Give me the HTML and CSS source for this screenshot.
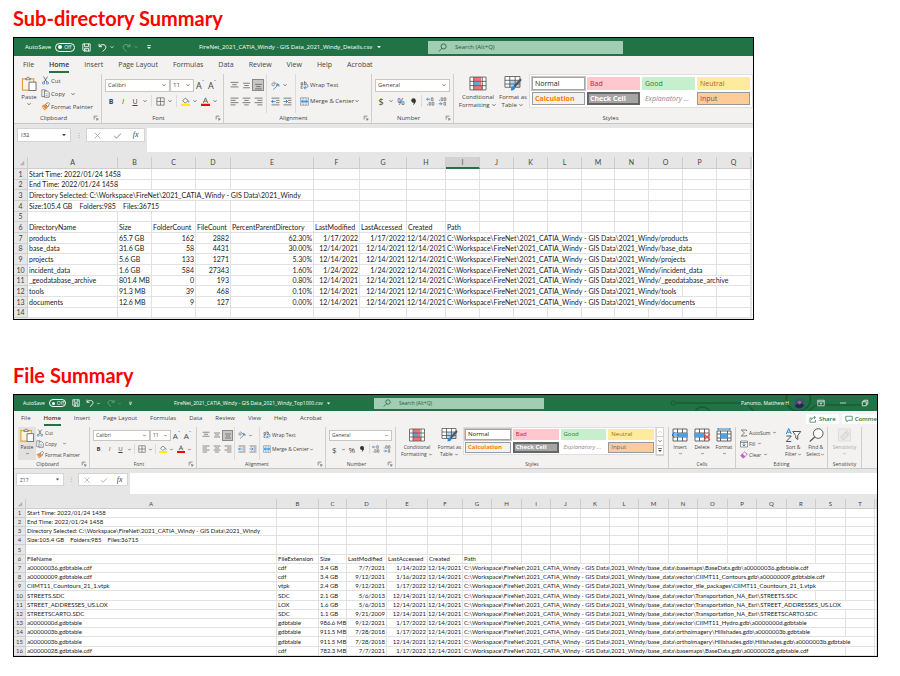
FILE: index.html
```html
<!DOCTYPE html>
<html lang="en">
<head>
<meta charset="utf-8">
<title>Directory and file summary</title>
<link rel="stylesheet" href="styles.css">
</head>
<body>
<svg class="defs" width="0" height="0" aria-hidden="true">
<symbol id="chev" viewBox="0 0 8 8"><path d="M2 3l2 2 2-2" fill="none" stroke="currentColor"/></symbol>
<symbol id="tri" viewBox="0 0 8 8"><path d="M1.500 2.500h5L4 5.500z" fill="currentColor"/></symbol>
<symbol id="save" viewBox="0 0 16 16"><path d="M1.500 1.500h13v13h-11l-2-2zM4.500 1.500v5h7v-5M4.500 14.500v-5h7v5M7 11v3" fill="none" stroke="currentColor" stroke-width="1.500"/></symbol>
<symbol id="undo" viewBox="0 0 16 16"><path d="M2 1.500v5h5M2 6.500c3-5 12-5 12 1 0 3-3 5-6 7.500" fill="none" stroke="currentColor" stroke-width="1.700"/></symbol>
<symbol id="redo" viewBox="0 0 16 16"><path d="M14 1.500v5H9M14 6.500c-3-5-12-5-12 1 0 3 3 5 6 7.500" fill="none" stroke="currentColor" stroke-width="1.700"/></symbol>
<symbol id="more" viewBox="0 0 8 8"><path d="M1.500 2h5" stroke="currentColor"/><path d="M1.500 4h5L4 6.500z" fill="currentColor"/></symbol>
<symbol id="lens" viewBox="0 0 16 16"><circle cx="10" cy="6" r="4.500" fill="none" stroke="currentColor" stroke-width="1.400"/><path d="M7 9.500L1.500 15" stroke="currentColor" stroke-width="1.400"/></symbol>
<symbol id="paste" viewBox="0 0 16 16"><path d="M1 3h12v12H1z" fill="#fbf3e4" stroke="#e5a044" stroke-width="1.300"/><path d="M4.500 4V2.500h1.500C6 .5 8 .5 8 2.500h1.500V4z" fill="#f3f2f1" stroke="#666" stroke-width=".8"/><path d="M8 6.500h7.500v9H8z" fill="#fff" stroke="#666"/></symbol>
<symbol id="cut" viewBox="0 0 16 16"><path d="M4.500 1l6 10M11.500 1l-6 10" stroke="#555" stroke-width="1.300"/><circle cx="4.500" cy="12.500" r="2" fill="none" stroke="#2b88d8" stroke-width="1.400"/><circle cx="11.500" cy="12.500" r="2" fill="none" stroke="#2b88d8" stroke-width="1.400"/></symbol>
<symbol id="copy" viewBox="0 0 16 16"><path d="M1.500 1.500h6v12h-6z" fill="#fff" stroke="#666" stroke-width="1.300"/><path d="M6 3.500h5.500l3 3v8H6z" fill="#fff" stroke="#555" stroke-width="1.300"/><path d="M8 8.500h4M8 11.500h4" stroke="#2b88d8"/></symbol>
<symbol id="brush" viewBox="0 0 16 16"><path d="M1 7l6-3 5 6-6 5z" fill="#ee8a2c"/><path d="M3 8l4 5" stroke="#fff"/><path d="M8 4l5-3 2 2-3 6z" fill="#fff" stroke="#555" stroke-width="1.200"/></symbol>
<symbol id="border" viewBox="0 0 16 16"><path d="M1.500 1.500h13v13h-13zM8 1.500v13M1.500 8h13" fill="none" stroke="#666" stroke-width="1.300"/></symbol>
<symbol id="fill" viewBox="0 0 16 16"><path d="M3 6.500L8 2l4.500 4.500-5 4.500z" fill="#fff" stroke="#555" stroke-width="1.300"/><path d="M12 6c2 1 2 3 2 4" fill="none" stroke="#2b88d8" stroke-width="1.600"/><path d="M0 12h16v4H0z" fill="#ffee00"/></symbol>
<symbol id="fcolor" viewBox="0 0 16 16"><path d="M4 10.500L8 1.500l4 9M5.500 7.500h5" fill="none" stroke="#555" stroke-width="1.500"/><path d="M0 12h16v4H0z" fill="#f00"/></symbol>
<symbol id="atop" viewBox="0 0 16 16"><path d="M1 2.500h14M4 6.500h8M1 10.500h14" stroke="#555" stroke-width="1.300"/></symbol>
<symbol id="amid" viewBox="0 0 16 16"><path d="M2 4h12M4 8h8M2 12h12" stroke="#555" stroke-width="1.300"/></symbol>
<symbol id="abot" viewBox="0 0 16 16"><path d="M2 6h12M4 10h8M2 14h12" stroke="#555" stroke-width="1.300"/></symbol>
<symbol id="aleft" viewBox="0 0 16 16"><path d="M1 2h14M1 6h9M1 10h14M1 14h9" stroke="#555" stroke-width="1.300"/></symbol>
<symbol id="acen" viewBox="0 0 16 16"><path d="M1 2h14M4 6h8M1 10h14M4 14h8" stroke="#555" stroke-width="1.300"/></symbol>
<symbol id="aright" viewBox="0 0 16 16"><path d="M1 2h14M6 6h9M1 10h14M6 14h9" stroke="#555" stroke-width="1.300"/></symbol>
<symbol id="orient" viewBox="0 0 16 16"><circle cx="4" cy="6" r="2.500" fill="none" stroke="#555"/><path d="M5 1l5 5M10 4a2 2 0 1 1-1 4" fill="none" stroke="#555"/><path d="M4 15L14 6M14 10V6h-4" fill="none" stroke="#2b88d8" stroke-width="1.500"/></symbol>
<symbol id="outdent" viewBox="0 0 16 16"><path d="M1 2h14M9 6h6M9 10h6M1 14h14" stroke="#555" stroke-width="1.300"/><path d="M8 8H1M4 5L1 8l3 3" fill="none" stroke="#2b88d8" stroke-width="1.600"/></symbol>
<symbol id="indent" viewBox="0 0 16 16"><path d="M1 2h14M9 6h6M9 10h6M1 14h14" stroke="#555" stroke-width="1.300"/><path d="M1 8h7M5 5l3 3-3 3" fill="none" stroke="#2b88d8" stroke-width="1.600"/></symbol>
<symbol id="wrap" viewBox="0 0 16 16"><path d="M2 3h3v4H2zM8 0v7h3V3H8M5 9H2v4h3" fill="none" stroke="#555" stroke-width="1.200"/><path d="M13 6c3 6-1 6-6 6M10 9l-3 3 3 3" fill="none" stroke="#2b88d8" stroke-width="1.600"/></symbol>
<symbol id="merge" viewBox="0 0 16 16"><path d="M1 1.500h14v13H1zM5.500 1.500v3M10.500 1.500v3M5.500 11.500v3M10.500 11.500v3" fill="#fff" stroke="#666"/><path d="M1 4.500h14v7H1z" fill="#9fd1f5"/><path d="M2.500 8h11M5 6L3 8l2 2M11 6l2 2-2 2" fill="none" stroke="#1b74c4" stroke-width="1.200"/></symbol>
<symbol id="comma" viewBox="0 0 16 16"><circle cx="8" cy="6" r="4" fill="#333"/><path d="M12 6c0 5-3 7-5 8 2-3 2-4 1-6z" fill="#333"/></symbol>
<symbol id="decinc" viewBox="0 0 16 16"><path d="M7 4H1M3.500 1.500L1 4l2.500 2.500" fill="none" stroke="#2b88d8" stroke-width="1.500"/><path d="M9.500 1.500h3v5h-3zM5.500 9.500h3v5h-3zM11 9.500h3v5h-3zM2.500 13v2" fill="none" stroke="#666" stroke-width="1.200"/></symbol>
<symbol id="decdec" viewBox="0 0 16 16"><path d="M1 12h6M4.500 9.500L7 12l-2.500 2.500" fill="none" stroke="#2b88d8" stroke-width="1.500"/><path d="M5.500 1.500h3v5h-3zM11 1.500h3v5h-3zM10.500 9.500h3v5h-3zM2.500 5v2" fill="none" stroke="#666" stroke-width="1.200"/></symbol>
<symbol id="cond" viewBox="0 0 16 14"><path d="M.5 1h15v12H.5z" fill="#fff"/><path d="M4 1h7v4H4zM4 9h8v4H4z" fill="#f6716f"/><path d="M4 5h5v4H4z" fill="#5aa7e6"/><path d="M9 5h2v4H9z" fill="#f6716f"/><path d="M.5 1h15v12H.5zM.5 5h15M.5 9h15M4 1v12M12 1v12" fill="none" stroke="#555" stroke-width=".8"/></symbol>
<symbol id="fmt" viewBox="0 0 16 14"><path d="M.5.500h14v10H.5z" fill="#fff"/><path d="M5 4h9.500v7H5z" fill="#a9d4f5"/><path d="M.5.500h14v10H.5zM.5 4h14M.5 7.500h14M5 .5v10M10 .5v10" fill="none" stroke="#555" stroke-width=".8"/><path d="M15.500 3L9 10" stroke="#555" stroke-width="2"/><path d="M6 13.500c0-3 1-4 3-4 2 1 1 4-3 4z" fill="#2b88d8"/></symbol>
<symbol id="launch" viewBox="0 0 8 8"><path d="M1.500 6V1.500H6M3.500 3.500l3 3M6.500 4v2.500H4" fill="none" stroke="#666" stroke-width=".9"/></symbol>
<symbol id="x" viewBox="0 0 16 16"><path d="M3 3l10 10M13 3L3 13" stroke="#a8a8a8" stroke-width="1.500"/></symbol>
<symbol id="tick" viewBox="0 0 16 16"><path d="M2 8.500l4 4 8-8" fill="none" stroke="#a8a8a8" stroke-width="1.800"/></symbol>
<symbol id="cins" viewBox="0 0 16 14"><path d="M1 1h14v12H1zM1 5h14M1 9h14M5.500 1v12M10.500 1v12" fill="#fff" stroke="#555" stroke-width=".9"/><path d="M5 5h11v4H5z" fill="#4aa3e8"/><path d="M7 7H0M2.500 4.500L0 7l2.500 2.500" fill="none" stroke="#1b74c4"/></symbol>
<symbol id="cdel" viewBox="0 0 16 14"><path d="M1 1h14v12H1zM1 5h14M1 9h14M5.500 1v12M10.500 1v12" fill="#fff" stroke="#555" stroke-width=".9"/><path d="M0 5h10v4H0z" fill="#4aa3e8"/><path d="M10 6l6 6M16 6l-6 6" stroke="#ec4b4b" stroke-width="1.300"/></symbol>
<symbol id="cfmt" viewBox="0 0 16 14"><path d="M1 3h14v10H1zM1 6h14M1 10h14M4.500 3v10M11.500 3v10" fill="#fff" stroke="#555" stroke-width=".9"/><path d="M4.500 5.500h7v5h-7z" fill="#4aa3e8"/><path d="M2 1h12M2 0v2M14 0v2" stroke="#1b74c4" stroke-width=".9"/></symbol>
<symbol id="sum" viewBox="0 0 16 16"><path d="M13 4V2H2.500L9 8l-6.500 6H13v-2" fill="none" stroke="#555" stroke-width="1.400"/></symbol>
<symbol id="down" viewBox="0 0 16 16"><path d="M1 2h14v12H1zM1 5h14" fill="#fff" stroke="#555" stroke-width="1.200"/><path d="M8 5v7M5 9l3 3 3-3" fill="none" stroke="#1b74c4" stroke-width="1.600"/></symbol>
<symbol id="eraser" viewBox="0 0 16 16"><path d="M1.500 9L9 2l5.500 4L8 13.500H5z" fill="#fff" stroke="#a53fb5" stroke-width="1.400"/><path d="M1.500 9L5 5.500l5.500 5-2.500 3H5z" fill="#c261cf"/></symbol>
<symbol id="sort" viewBox="0 0 16 14"><path d="M1 6l2.500-5.500L6 6M2 4.200h3" fill="none" stroke="#1b88d8"/><path d="M1 8h5l-5 5.500h5" fill="none" stroke="#555"/><path d="M7.500 3.500h8l-3 4v4l-2-1.500V7.500z" fill="#fff" stroke="#555"/></symbol>
<symbol id="find" viewBox="0 0 16 14"><circle cx="10" cy="5.500" r="4.800" fill="#fff" stroke="#555"/><path d="M6.500 9L1.500 13.500" stroke="#555" stroke-width="1.200"/></symbol>
<symbol id="sens" viewBox="0 0 16 14"><path d="M2 1h12v12H2z" fill="#e6e6e6" stroke="#c4c4c4"/><path d="M4 9l5-5 3 3-5 5zM9 2l4 4" fill="#d0d0d0" stroke="#aaa"/></symbol>
<symbol id="share" viewBox="0 0 16 16"><path d="M6 6H2v8.500h11V10M5 10c1-4 4-5 7-5M10 2l3 3-3 3" fill="none" stroke="#217346" stroke-width="1.400"/></symbol>
<symbol id="comment" viewBox="0 0 16 16"><path d="M1.500 2.500h13v8H7l-3 3v-3H1.500z" fill="none" stroke="#217346" stroke-width="1.400"/></symbol>
<symbol id="ropts" viewBox="0 0 16 16"><path d="M1.500 2.500h13v11h-13zM1.500 5.500h13M8 12V7.500M6 9.500l2-2 2 2" fill="none" stroke="#fff" stroke-width="1.300"/></symbol>
<symbol id="min" viewBox="0 0 16 16"><path d="M2 8h12" stroke="#fff" stroke-width="1.300"/></symbol>
<symbol id="restore" viewBox="0 0 16 16"><path d="M2.500 5.500h8v8h-8zM5.500 5.500v-3h8v8h-3" fill="none" stroke="#fff" stroke-width="1.500"/></symbol>
<symbol id="corner" viewBox="0 0 8 8"><path d="M7 1v6H1z" fill="#b4b4b4"/></symbol>
</svg>

<main>
<h1>Sub-directory Summary</h1>
<section class="win win-a">
  <header class="title">
    <div class="quick">
      <label class="auto">AutoSave <span class="pill"><input type="checkbox"><i></i>Off</span></label>
      <button aria-label="Save"><svg class="i"><use href="#save"/></svg></button>
      <button aria-label="Undo"><svg class="i"><use href="#undo"/></svg><svg class="c"><use href="#chev"/></svg></button>
      <button class="dim" aria-label="Redo"><svg class="i"><use href="#redo"/></svg><svg class="c"><use href="#chev"/></svg></button>
      <button aria-label="Customize"><svg class="c"><use href="#more"/></svg></button>
    </div>
    <div class="name">FireNet_2021_CATIA_Windy - GIS Data_2021_Windy_Details.csv <svg class="c"><use href="#tri"/></svg></div>
    <label class="search"><svg class="i"><use href="#lens"/></svg><input type="text" placeholder="Search (Alt+Q)" aria-label="Search"></label>
  </header>
  <nav class="tabs"><button>File</button><button class="on">Home</button><button>Insert</button><button>Page Layout</button><button>Formulas</button><button>Data</button><button>Review</button><button>View</button><button>Help</button><button>Acrobat</button></nav>
  <div class="ribbon">
    <div class="group clip">
      <div class="body">
        <button class="big"><svg><use href="#paste"/></svg><span>Paste</span><svg class="c"><use href="#chev"/></svg></button>
        <div class="list">
          <button><svg class="i"><use href="#cut"/></svg>Cut</button>
          <button><svg class="i"><use href="#copy"/></svg>Copy <svg class="c"><use href="#chev"/></svg></button>
          <button><svg class="i"><use href="#brush"/></svg>Format Painter</button>
        </div>
      </div>
      <div class="label"><span>Clipboard</span><svg><use href="#launch"/></svg></div>
    </div>
    <div class="group font">
      <div class="body rows">
        <div class="row">
          <span class="pick face"><select aria-label="Font"><option>Calibri</option></select><svg class="c"><use href="#chev"/></svg></span>
          <span class="pick size"><select aria-label="Font size"><option>11</option></select><svg class="c"><use href="#chev"/></svg></span>
          <button class="ib grow">A<sup>ˆ</sup></button><button class="ib shrink">A<sup>ˇ</sup></button>
        </div>
        <div class="row">
          <button class="ib"><b>B</b></button><button class="ib"><em>I</em></button><button class="ib"><u>U</u></button><button class="cb" aria-label="Underline style"><svg><use href="#chev"/></svg></button><hr>
          <button class="ib" aria-label="Borders"><svg><use href="#border"/></svg></button><button class="cb" aria-label="Border style"><svg><use href="#chev"/></svg></button><hr>
          <button class="ib" aria-label="Fill colour"><svg><use href="#fill"/></svg></button><button class="cb" aria-label="Fill choices"><svg><use href="#chev"/></svg></button>
          <button class="ib" aria-label="Font colour"><svg><use href="#fcolor"/></svg></button><button class="cb" aria-label="Font colour choices"><svg><use href="#chev"/></svg></button>
        </div>
      </div>
      <div class="label"><span>Font</span><svg><use href="#launch"/></svg></div>
    </div>
    <div class="group align">
      <div class="body">
        <div class="rows">
          <div class="row"><button class="ib" aria-label="Top"><svg><use href="#atop"/></svg></button><button class="ib" aria-label="Middle"><svg><use href="#amid"/></svg></button><button class="ib pressed" aria-label="Bottom"><svg><use href="#abot"/></svg></button></div>
          <div class="row"><button class="ib" aria-label="Left"><svg><use href="#aleft"/></svg></button><button class="ib" aria-label="Centre"><svg><use href="#acen"/></svg></button><button class="ib" aria-label="Right"><svg><use href="#aright"/></svg></button></div>
        </div><hr>
        <div class="rows">
          <div class="row"><button class="ib" aria-label="Orientation"><svg><use href="#orient"/></svg></button><button class="cb" aria-label="Angles"><svg><use href="#chev"/></svg></button></div>
          <div class="row"><button class="ib" aria-label="Outdent"><svg><use href="#outdent"/></svg></button><button class="ib" aria-label="Indent"><svg><use href="#indent"/></svg></button></div>
        </div><hr>
        <div class="rows">
          <div class="row"><button class="tb"><span class="ib"><svg><use href="#wrap"/></svg></span>Wrap Text</button></div>
          <div class="row"><button class="tb"><span class="ib"><svg><use href="#merge"/></svg></span>Merge &amp; Center <svg class="c"><use href="#chev"/></svg></button></div>
        </div>
      </div>
      <div class="label"><span>Alignment</span><svg><use href="#launch"/></svg></div>
    </div>
    <div class="group number">
      <div class="body rows">
        <div class="row"><span class="pick"><select aria-label="Number format"><option>General</option></select><svg class="c"><use href="#chev"/></svg></span></div>
        <div class="row"><button class="ib glyph">$</button><button class="cb" aria-label="Currency"><svg><use href="#chev"/></svg></button><button class="ib glyph">%</button><button class="ib" aria-label="Comma"><svg><use href="#comma"/></svg></button><hr><button class="ib" aria-label="More decimals"><svg><use href="#decinc"/></svg></button><button class="ib" aria-label="Fewer decimals"><svg><use href="#decdec"/></svg></button></div>
      </div>
      <div class="label"><span>Number</span><svg><use href="#launch"/></svg></div>
    </div>
    <div class="group styles">
      <div class="body">
        <button class="big"><svg><use href="#cond"/></svg><span>Conditional</span><span>Formatting <svg class="c"><use href="#chev"/></svg></span></button>
        <button class="big"><svg><use href="#fmt"/></svg><span>Format as</span><span>Table <svg class="c"><use href="#chev"/></svg></span></button>
        <div class="gallery"><button class="s-normal">Normal</button><button class="s-bad">Bad</button><button class="s-good">Good</button><button class="s-neutral">Neutral</button><button class="s-calc">Calculation</button><button class="s-check">Check Cell</button><button class="s-expl">Explanatory ...</button><button class="s-input">Input</button></div>
      </div>
      <div class="label"><span>Styles</span></div>
    </div>
  </div>
  <div class="formula">
    <label class="cell"><input type="text" value="I32" aria-label="Name box"><svg class="c"><use href="#tri"/></svg></label>
    <span class="dots">⋮</span>
    <div class="fx"><button aria-label="Cancel"><svg class="i"><use href="#x"/></svg></button><button aria-label="Enter"><svg class="i"><use href="#tick"/></svg></button><button><em>fx</em></button></div>
    <input class="bar" type="text" aria-label="Formula">
  </div>
  <table>
    <colgroup><col class="w14"><col class="w90"><col class="w34"><col class="w44"><col class="w35"><col class="w83"><col class="w46"><col class="w47"><col class="w39"><col class="w34"><col class="w34"><col class="w34"><col class="w34"><col class="w33"><col class="w34"><col class="w34"><col class="w34"><col class="w34"><col></colgroup>
    <thead><tr><th class="corner"><svg><use href="#corner"/></svg><th>A<th>B<th>C<th>D<th>E<th>F<th>G<th>H<th class="sel">I<th>J<th>K<th>L<th>M<th>N<th>O<th>P<th>Q<th></thead>
    <tbody>
    <tr><th>1<td colspan="2">Start Time: 2022/01/24 1458<td><td><td><td><td><td><td><td><td><td><td><td><td><td><td><td>
    <tr><th>2<td>End Time: 2022/01/24 1458<td><td><td><td><td><td><td><td><td><td><td><td><td><td><td><td><td><td>
    <tr><th>3<td colspan="5">Directory Selected: C:\Workspace\FireNet\2021_CATIA_Windy - GIS Data\2021_Windy<td><td><td><td><td><td><td><td><td><td><td><td><td>
    <tr><th>4<td colspan="3">Size:105.4 GB &nbsp; &nbsp;Folders:985 &nbsp; &nbsp;Files:36715<td><td><td><td><td><td><td><td><td><td><td><td><td><td><td>
    <tr><th>5<td><td><td><td><td><td><td><td><td><td><td><td><td><td><td><td><td><td>
    <tr><th>6<td>DirectoryName<td>Size<td>FolderCount<td>FileCount<td>PercentParentDirectory<td>LastModified<td>LastAccessed<td>Created<td>Path<td><td><td><td><td><td><td><td><td>
    <tr><th>7<td>products<td>65.7 GB<td class="n">162<td class="n">2882<td class="n">62.30%<td class="n">1/17/2022<td class="n">1/17/2022<td class="n">12/14/2021<td colspan="8">C:\Workspace\FireNet\2021_CATIA_Windy - GIS Data\2021_Windy/products<td><td>
    <tr><th>8<td>base_data<td>31.6 GB<td class="n">58<td class="n">4431<td class="n">30.00%<td class="n">12/14/2021<td class="n">12/14/2021<td class="n">12/14/2021<td colspan="8">C:\Workspace\FireNet\2021_CATIA_Windy - GIS Data\2021_Windy/base_data<td><td>
    <tr><th>9<td>projects<td>5.6 GB<td class="n">133<td class="n">1271<td class="n">5.30%<td class="n">12/14/2021<td class="n">12/14/2021<td class="n">12/14/2021<td colspan="8">C:\Workspace\FireNet\2021_CATIA_Windy - GIS Data\2021_Windy/projects<td><td>
    <tr><th>10<td>incident_data<td>1.6 GB<td class="n">584<td class="n">27343<td class="n">1.60%<td class="n">1/24/2022<td class="n">1/24/2022<td class="n">12/14/2021<td colspan="8">C:\Workspace\FireNet\2021_CATIA_Windy - GIS Data\2021_Windy/incident_data<td><td>
    <tr><th>11<td>_geodatabase_archive<td>801.4 MB<td class="n">0<td class="n">193<td class="n">0.80%<td class="n">12/14/2021<td class="n">12/14/2021<td class="n">12/14/2021<td colspan="9">C:\Workspace\FireNet\2021_CATIA_Windy - GIS Data\2021_Windy/_geodatabase_archive<td>
    <tr><th>12<td>tools<td>91.3 MB<td class="n">39<td class="n">468<td class="n">0.10%<td class="n">12/14/2021<td class="n">12/14/2021<td class="n">12/14/2021<td colspan="7">C:\Workspace\FireNet\2021_CATIA_Windy - GIS Data\2021_Windy/tools<td><td><td>
    <tr><th>13<td>documents<td>12.6 MB<td class="n">9<td class="n">127<td class="n">0.00%<td class="n">12/14/2021<td class="n">12/14/2021<td class="n">12/14/2021<td colspan="8">C:\Workspace\FireNet\2021_CATIA_Windy - GIS Data\2021_Windy/documents<td><td>
    <tr><th>14<td><td><td><td><td><td><td><td><td><td><td><td><td><td><td><td><td><td>
    </tbody>
  </table>
</section>

<h1 class="second">File Summary</h1>
<section class="win win-b">
  <header class="title">
    <div class="quick">
      <label class="auto">AutoSave <span class="pill"><input type="checkbox"><i></i>Off</span></label>
      <button aria-label="Save"><svg class="i"><use href="#save"/></svg></button>
      <button aria-label="Undo"><svg class="i"><use href="#undo"/></svg><svg class="c"><use href="#chev"/></svg></button>
      <button class="dim" aria-label="Redo"><svg class="i"><use href="#redo"/></svg><svg class="c"><use href="#chev"/></svg></button>
      <button aria-label="Customize"><svg class="c"><use href="#more"/></svg></button>
    </div>
    <div class="name">FireNet_2021_CATIA_Windy - GIS Data_2021_Windy_Top1000.csv <svg class="c"><use href="#tri"/></svg></div>
    <label class="search"><svg class="i"><use href="#lens"/></svg><input type="text" placeholder="Search (Alt+Q)" aria-label="Search"></label>
    <div class="user">
      <svg class="circuit" viewBox="0 0 330 16" preserveAspectRatio="xMaxYMid slice" aria-hidden="true"><path d="M130 8h70l8 8M262 16l8-6h50M150 16a8 8 0 0 1 14 0" fill="none" stroke="#1a5c38" stroke-width="1.500"/><circle cx="128" cy="8" r="2" fill="none" stroke="#1a5c38"/><circle cx="252" cy="4" r="12" fill="none" stroke="#1a5c38" stroke-width="2"/></svg>
      <span>Panunto, Matthew H</span>
      <svg class="avatar" viewBox="0 0 12 12"><circle cx="6" cy="6" r="6" fill="#37527c"/><path d="M1 9c2-4 7-5 10-1a6 6 0 0 1-10 1z" fill="#1d2c49"/><circle cx="6" cy="5" r="2" fill="#a5695a"/></svg>
      <button aria-label="Ribbon options"><svg class="i"><use href="#ropts"/></svg></button><button aria-label="Minimize"><svg class="i"><use href="#min"/></svg></button><button aria-label="Restore"><svg class="i"><use href="#restore"/></svg></button>
    </div>
  </header>
  <nav class="tabs"><button>File</button><button class="on">Home</button><button>Insert</button><button>Page Layout</button><button>Formulas</button><button>Data</button><button>Review</button><button>View</button><button>Help</button><button>Acrobat</button>
    <span class="actions"><button><svg class="i"><use href="#share"/></svg>Share</button><button class="cut"><svg class="i"><use href="#comment"/></svg>Comme</button></span></nav>
  <div class="ribbon">
    <div class="group clip">
      <div class="body">
        <button class="big shade"><svg><use href="#paste"/></svg><span>Paste</span><svg class="c"><use href="#chev"/></svg></button>
        <div class="list">
          <button><svg class="i"><use href="#cut"/></svg>Cut</button>
          <button><svg class="i"><use href="#copy"/></svg>Copy <svg class="c"><use href="#chev"/></svg></button>
          <button><svg class="i"><use href="#brush"/></svg>Format Painter</button>
        </div>
      </div>
      <div class="label"><span>Clipboard</span><svg><use href="#launch"/></svg></div>
    </div>
    <div class="group font">
      <div class="body rows">
        <div class="row">
          <span class="pick face"><select aria-label="Font"><option>Calibri</option></select><svg class="c"><use href="#chev"/></svg></span>
          <span class="pick size"><select aria-label="Font size"><option>11</option></select><svg class="c"><use href="#chev"/></svg></span>
          <button class="ib grow">A<sup>ˆ</sup></button><button class="ib shrink">A<sup>ˇ</sup></button>
        </div>
        <div class="row">
          <button class="ib"><b>B</b></button><button class="ib"><em>I</em></button><button class="ib"><u>U</u></button><button class="cb" aria-label="Underline style"><svg><use href="#chev"/></svg></button><hr>
          <button class="ib" aria-label="Borders"><svg><use href="#border"/></svg></button><button class="cb" aria-label="Border style"><svg><use href="#chev"/></svg></button><hr>
          <button class="ib" aria-label="Fill colour"><svg><use href="#fill"/></svg></button><button class="cb" aria-label="Fill choices"><svg><use href="#chev"/></svg></button>
          <button class="ib" aria-label="Font colour"><svg><use href="#fcolor"/></svg></button><button class="cb" aria-label="Font colour choices"><svg><use href="#chev"/></svg></button>
        </div>
      </div>
      <div class="label"><span>Font</span><svg><use href="#launch"/></svg></div>
    </div>
    <div class="group align">
      <div class="body">
        <div class="rows">
          <div class="row"><button class="ib" aria-label="Top"><svg><use href="#atop"/></svg></button><button class="ib" aria-label="Middle"><svg><use href="#amid"/></svg></button><button class="ib pressed" aria-label="Bottom"><svg><use href="#abot"/></svg></button></div>
          <div class="row"><button class="ib" aria-label="Left"><svg><use href="#aleft"/></svg></button><button class="ib" aria-label="Centre"><svg><use href="#acen"/></svg></button><button class="ib" aria-label="Right"><svg><use href="#aright"/></svg></button></div>
        </div><hr>
        <div class="rows">
          <div class="row"><button class="ib" aria-label="Orientation"><svg><use href="#orient"/></svg></button><button class="cb" aria-label="Angles"><svg><use href="#chev"/></svg></button></div>
          <div class="row"><button class="ib" aria-label="Outdent"><svg><use href="#outdent"/></svg></button><button class="ib" aria-label="Indent"><svg><use href="#indent"/></svg></button></div>
        </div><hr>
        <div class="rows">
          <div class="row"><button class="tb"><span class="ib"><svg><use href="#wrap"/></svg></span>Wrap Text</button></div>
          <div class="row"><button class="tb"><span class="ib"><svg><use href="#merge"/></svg></span>Merge &amp; Center <svg class="c"><use href="#chev"/></svg></button></div>
        </div>
      </div>
      <div class="label"><span>Alignment</span><svg><use href="#launch"/></svg></div>
    </div>
    <div class="group number">
      <div class="body rows">
        <div class="row"><span class="pick"><select aria-label="Number format"><option>General</option></select><svg class="c"><use href="#chev"/></svg></span></div>
        <div class="row"><button class="ib glyph">$</button><button class="cb" aria-label="Currency"><svg><use href="#chev"/></svg></button><button class="ib glyph">%</button><button class="ib" aria-label="Comma"><svg><use href="#comma"/></svg></button><hr><button class="ib" aria-label="More decimals"><svg><use href="#decinc"/></svg></button><button class="ib" aria-label="Fewer decimals"><svg><use href="#decdec"/></svg></button></div>
      </div>
      <div class="label"><span>Number</span><svg><use href="#launch"/></svg></div>
    </div>
    <div class="group styles">
      <div class="body">
        <button class="big"><svg><use href="#cond"/></svg><span>Conditional</span><span>Formatting <svg class="c"><use href="#chev"/></svg></span></button>
        <button class="big"><svg><use href="#fmt"/></svg><span>Format as</span><span>Table <svg class="c"><use href="#chev"/></svg></span></button>
        <div class="gallery"><button class="s-normal">Normal</button><button class="s-bad">Bad</button><button class="s-good">Good</button><button class="s-neutral">Neutral</button><button class="s-calc">Calculation</button><button class="s-check">Check Cell</button><button class="s-expl">Explanatory ...</button><button class="s-input">Input</button></div>
        <div class="scroll"><button class="flip" aria-label="Up"><svg><use href="#chev"/></svg></button><button aria-label="Down"><svg><use href="#chev"/></svg></button><button aria-label="More"><svg><use href="#more"/></svg></button></div>
      </div>
      <div class="label"><span>Styles</span></div>
    </div>
    <div class="group cells">
      <div class="body">
        <button class="big"><svg><use href="#cins"/></svg><span>Insert</span><svg class="c"><use href="#chev"/></svg></button>
        <button class="big"><svg><use href="#cdel"/></svg><span>Delete</span><svg class="c"><use href="#chev"/></svg></button>
        <button class="big"><svg><use href="#cfmt"/></svg><span>Format</span><svg class="c"><use href="#chev"/></svg></button>
      </div>
      <div class="label"><span>Cells</span></div>
    </div>
    <div class="group editing">
      <div class="body">
        <div class="list">
          <button><svg class="i"><use href="#sum"/></svg>AutoSum <svg class="c"><use href="#chev"/></svg></button>
          <button><svg class="i"><use href="#down"/></svg>Fill<svg class="c"><use href="#chev"/></svg></button>
          <button><svg class="i"><use href="#eraser"/></svg>Clear<svg class="c"><use href="#chev"/></svg></button>
        </div>
        <button class="big"><svg><use href="#sort"/></svg><span>Sort &amp;</span><span>Filter<svg class="c"><use href="#chev"/></svg></span></button>
        <button class="big"><svg><use href="#find"/></svg><span>Find &amp;</span><span>Select<svg class="c"><use href="#chev"/></svg></span></button>
      </div>
      <div class="label"><span>Editing</span></div>
    </div>
    <div class="group sens">
      <div class="body"><button class="big off" disabled><svg><use href="#sens"/></svg><span>Sensitivity</span><svg class="c"><use href="#chev"/></svg></button></div>
      <div class="label"><span>Sensitivity</span></div>
    </div>
  </div>
  <div class="formula">
    <label class="cell"><input type="text" value="Z17" aria-label="Name box"><svg class="c"><use href="#tri"/></svg></label>
    <span class="dots">⋮</span>
    <div class="fx"><button aria-label="Cancel"><svg class="i"><use href="#x"/></svg></button><button aria-label="Enter"><svg class="i"><use href="#tick"/></svg></button><button><em>fx</em></button></div>
    <input class="bar" type="text" aria-label="Formula">
  </div>
  <table>
    <colgroup><col class="w12"><col class="w251"><col class="w42"><col class="w28"><col class="w40"><col class="w41"><col class="w35"><col class="w29"><col class="w30"><col class="w29"><col class="w30"><col class="w29"><col class="w29"><col class="w30"><col class="w29"><col class="w30"><col class="w29"><col class="w30"><col class="w29"><col class="w30"><col class="w29"><col></colgroup>
    <thead><tr><th class="corner"><svg><use href="#corner"/></svg><th>A<th>B<th>C<th>D<th>E<th>F<th>G<th>H<th>I<th>J<th>K<th>L<th>M<th>N<th>O<th>P<th>Q<th>R<th>S<th>T<th></thead>
    <tbody>
    <tr><th>1<td>Start Time: 2022/01/24 1458<td><td><td><td><td><td><td><td><td><td><td><td><td><td><td><td><td><td><td><td>
    <tr><th>2<td>End Time: 2022/01/24 1458<td><td><td><td><td><td><td><td><td><td><td><td><td><td><td><td><td><td><td><td>
    <tr><th>3<td>Directory Selected: C:\Workspace\FireNet\2021_CATIA_Windy - GIS Data\2021_Windy<td><td><td><td><td><td><td><td><td><td><td><td><td><td><td><td><td><td><td><td>
    <tr><th>4<td>Size:105.4 GB &nbsp; &nbsp;Folders:985 &nbsp; &nbsp;Files:36715<td><td><td><td><td><td><td><td><td><td><td><td><td><td><td><td><td><td><td><td>
    <tr><th>5<td><td><td><td><td><td><td><td><td><td><td><td><td><td><td><td><td><td><td><td><td>
    <tr><th>6<td>FileName<td>FileExtension<td>Size<td>LastModified<td>LastAccessed<td>Created<td>Path<td><td><td><td><td><td><td><td><td><td><td><td><td><td>
    <tr><th>7<td>a00000036.gdbtable.cdf<td>cdf<td>3.4 GB<td class="n">7/7/2021<td class="n">1/14/2022<td class="n">12/14/2021<td colspan="13">C:\Workspace\FireNet\2021_CATIA_Windy - GIS Data\2021_Windy/base_data\basemaps\BaseData.gdb\a00000036.gdbtable.cdf<td><td>
    <tr><th>8<td>a00000009.gdbtable.cdf<td>cdf<td>3.4 GB<td class="n">9/12/2021<td class="n">1/16/2022<td class="n">12/14/2021<td colspan="13">C:\Workspace\FireNet\2021_CATIA_Windy - GIS Data\2021_Windy/base_data\vector\CIIMT11_Contours.gdb\a00000009.gdbtable.cdf<td><td>
    <tr><th>9<td>CIIMT11_Countours_21_1.vtpk<td>vtpk<td>2.4 GB<td class="n">9/12/2021<td class="n">1/17/2022<td class="n">12/14/2021<td colspan="13">C:\Workspace\FireNet\2021_CATIA_Windy - GIS Data\2021_Windy/base_data\vector_tile_packages\CIIMT11_Countours_21_1.vtpk<td><td>
    <tr><th>10<td>STREETS.SDC<td>SDC<td>2.1 GB<td class="n">5/6/2013<td class="n">12/14/2021<td class="n">12/14/2021<td colspan="12">C:\Workspace\FireNet\2021_CATIA_Windy - GIS Data\2021_Windy/base_data\vector\Transportation_NA_Esri\STREETS.SDC<td><td><td>
    <tr><th>11<td>STREET_ADDRESSES_US.LOX<td>LOX<td>1.6 GB<td class="n">5/6/2013<td class="n">12/14/2021<td class="n">12/14/2021<td colspan="14">C:\Workspace\FireNet\2021_CATIA_Windy - GIS Data\2021_Windy/base_data\vector\Transportation_NA_Esri\STREET_ADDRESSES_US.LOX<td>
    <tr><th>12<td>STREETSCARTO.SDC<td>SDC<td>1.1 GB<td class="n">9/21/2009<td class="n">12/14/2021<td class="n">12/14/2021<td colspan="13">C:\Workspace\FireNet\2021_CATIA_Windy - GIS Data\2021_Windy/base_data\vector\Transportation_NA_Esri\STREETSCARTO.SDC<td><td>
    <tr><th>13<td>a0000000d.gdbtable<td>gdbtable<td>986.6 MB<td class="n">9/12/2021<td class="n">1/17/2022<td class="n">12/14/2021<td colspan="13">C:\Workspace\FireNet\2021_CATIA_Windy - GIS Data\2021_Windy/base_data\vector\CIIMT11_Hydro.gdb\a0000000d.gdbtable<td><td>
    <tr><th>14<td>a0000003b.gdbtable<td>gdbtable<td>911.5 MB<td class="n">7/28/2018<td class="n">1/17/2022<td class="n">12/14/2021<td colspan="13">C:\Workspace\FireNet\2021_CATIA_Windy - GIS Data\2021_Windy/base_data\orthoimagery\Hillshades.gdb\a0000003b.gdbtable<td><td>
    <tr><th>15<td>a0000003b.gdbtable<td>gdbtable<td>911.5 MB<td class="n">7/28/2018<td class="n">12/14/2021<td class="n">12/14/2021<td colspan="14">C:\Workspace\FireNet\2021_CATIA_Windy - GIS Data\2021_Windy/base_data\orthoimagery\Hillshades.gdb\Hillshades.gdb\a0000003b.gdbtable<td>
    <tr><th>16<td>a00000028.gdbtable.cdf<td>cdf<td>782.3 MB<td class="n">7/7/2021<td class="n">1/17/2022<td class="n">12/14/2021<td colspan="13">C:\Workspace\FireNet\2021_CATIA_Windy - GIS Data\2021_Windy/base_data\basemaps\BaseData.gdb\a00000028.gdbtable.cdf<td><td>
    </tbody>
  </table>
</section>
</main>
</body>
</html>
```
FILE: styles.css
```css
* { box-sizing: border-box; }
body { margin: 0; background: #fff; }
.defs { position: absolute; }
main { padding: 0 22px 0 13px; }
h1 { margin: 0; padding-top: 6px; height: 37px; font: 700 20px/24px Lato, sans-serif; color: #f00; }
h1.second { margin-top: 37px; }

.win { border: 1px solid #000; background: #e6e6e6; color: #444; font-family: "Open Sans", sans-serif; overflow: hidden; white-space: nowrap; }
.win-a {
  --fs: 6px; --tab: 7px; --lh: 8px; --i: 9px; --c: 6px; --ib: 12px; --cb: 8px; --big: 15px; --glyph: 9px; --sep: 2px;
  margin-right: 124px; padding-bottom: 1px; font-size: 6px;
}
.win-b {
  --fs: 5px; --tab: 6px; --lh: 7px; --i: 8px; --c: 5px; --ib: 11px; --cb: 7px; --big: 14px; --glyph: 8px; --sep: 1px;
  font-size: 5px;
}
.win button, .win input, .win select { margin: 0; padding: 0; border: 0; background: none; color: inherit; font: inherit; outline: 0; }
.win button { display: flex; align-items: center; }
.win svg { display: block; flex: none; }
.i { width: var(--i); height: var(--i); }
.win .c { display: inline-block; width: var(--c); height: var(--c); vertical-align: middle; }

/* Title bar */
.title { display: grid; align-items: center; background: #217346; color: #fff; }
.win-a .title { grid-template-columns: 185px 229px 195px 1fr; height: 18px; }
.win-b .title { grid-template-columns: 160px 200px 170px 1fr; height: 16px; }
.quick { display: flex; align-items: center; gap: 7px; padding-left: 11px; }
.win-b .quick { gap: 6px; padding-left: 9px; }
.quick button { gap: 2px; }
.dim { opacity: .35; }
.auto { display: flex; align-items: center; gap: 4px; }
.pill { position: relative; display: flex; align-items: center; gap: 2px; width: 20px; height: 9px; padding-left: 2px; border: 1px solid #fff; border-radius: 5px; font-size: 5px; }
.win-b .pill { width: 17px; height: 8px; gap: 2px; }
.pill i { width: 4px; height: 4px; border-radius: 50%; background: #fff; }
.win-b .pill i { width: 3px; height: 3px; }
.pill input { position: absolute; inset: 0; opacity: 0; }
.name .c { margin-left: 2px; }
.search { display: flex; align-items: center; gap: 8px; height: 13px; padding-left: 10px; background: #a0cdb3; color: #1e5c3a; }
.win-b .search { height: 11px; padding-left: 9px; }
.search input { flex: 1; min-width: 0; }
.search input::placeholder { color: #1e5c3a; opacity: 1; }
.user { position: relative; display: flex; align-items: center; justify-content: flex-end; align-self: stretch; padding-right: 8px; }
.circuit { position: absolute; inset: 0; width: 100%; height: 100%; }
.user span, .avatar, .user button { position: relative; }
.avatar { width: 11px; height: 11px; margin: 0 12px 0 5px; }
.user button + button { margin-left: 14px; }

/* Tabs */
.tabs { display: flex; align-items: center; gap: 15px; height: 17px; padding-left: 9px; background: #f3f2f1; font-size: var(--tab); }
.win-b .tabs { gap: 13px; height: 15px; padding-left: 7px; }
.win .tabs button { align-self: stretch; border-bottom: 2px solid transparent; border-top: 1px solid transparent; }
.win .tabs .on { border-bottom-color: #217346; color: #333; font-weight: 600; }
.actions { display: flex; gap: 3px; height: 10px; margin-left: auto; color: #217346; }
.win .actions button { gap: 2px; padding: 0 3px; border: 0; background: #fff; font-weight: 600; }
.win .actions .cut { padding-right: 0; }

/* Ribbon */
.ribbon { display: flex; height: 51px; padding-top: 1px; background: #f3f2f1; border-bottom: 1px solid #c8c8c8; }
.win-b .ribbon { height: 43px; }
.group { display: flex; flex-direction: column; border-right: 1px solid #d0cecc; }
.body { display: flex; flex: 1; min-height: 0; }
.label { display: flex; align-items: center; line-height: 10px; text-align: center; }
.win-b .label { line-height: 8px; }
.label span { flex: 1; }
.label svg { width: 6px; height: 6px; margin-right: 2px; }
.clip { width: 88px; } .font { width: 122px; } .align { width: 148px; } .number { width: 82px; }
.win-b .clip { width: 76px; } .win-b .font { width: 107px; } .win-b .align { width: 129px; } .win-b .number { width: 70px; }
.win-a .styles { flex: 1; border-right: 0; }
.win-a .styles .label { padding-left: 14px; }
.win-b .styles { width: 273px; } .cells { width: 67px; } .editing { width: 92px; } .sens { width: 34px; }
.win .big { flex-direction: column; line-height: var(--lh); padding-top: 2px; }
.big > svg:first-child { width: 100%; height: var(--big); margin-bottom: 2px; }
.win-b .big { padding-top: 1px; }
.clip .big { width: 24px; margin-left: 3px; }
.win-b .clip .big { width: 18px; margin-left: 4px; }
.win .shade { background: #e3e1df; }
.list { display: grid; grid-template-rows: 1fr 1fr 1fr; }
.list button { gap: 1px; }
.list .c { margin-left: 4px; }
.rows { display: flex; flex-direction: column; padding-top: 3px; }
.win-b .rows { padding-top: 1px; }
.row { display: flex; align-items: center; height: 16px; }
.win-b .row { height: 14px; }
.font .rows, .number .rows { padding-left: 3px; padding-right: 3px; }
.align .body { padding-left: 4px; }
.win-b .align .body { padding-left: 3px; }
.win .ib { display: flex; align-items: center; justify-content: center; width: var(--ib); height: var(--ib); font-size: var(--tab); }
.ib svg { width: var(--i); height: var(--i); }
.win .glyph, .win .grow { font-size: var(--glyph); }
.win .shrink { font-size: var(--glyph); }
.ib sup { font-size: 6px; line-height: 1; align-self: flex-start; color: #2b88d8; }
.grow { margin-left: 3px; }
.win .pressed { background: #c8c6c4; border: 1px solid #8a8886; }
.cb { width: var(--cb); }
.cb svg { width: var(--c); height: var(--c); margin: auto; }
.win hr { align-self: stretch; width: 1px; margin: 0 var(--sep); border: 0; background: #dddbd9; }
.row hr { margin-block: 2px; }
.pick { display: flex; align-items: center; flex: 1; height: 13px; padding: 0 2px; border: 1px solid #c8c6c4; background: #fff; }
.win-b .pick { height: 11px; }
.pick select { flex: 1; min-width: 0; appearance: none; }
.pick.face { flex: none; width: 65px; }
.pick.size { flex: none; width: 24px; }
.win-b .pick.face { width: 57px; }
.win-b .pick.size { width: 21px; }
.styles .big { width: 38px; }
.styles .big + .big { width: 32px; }
.win-b .styles .big + .big { width: 27px; }
.styles .body { padding-left: 5px; }
.win-b .styles .body { padding-left: 2px; }
.gallery { display: grid; flex: 1; grid-template-columns: repeat(4, 1fr); align-self: start; gap: 2px; padding: 2px; background: #fff; border: 1px solid #e1dfdd; }
.win .gallery button { height: 13px; padding-left: 2px; font-size: var(--tab); line-height: 9px; border: 1px solid transparent; overflow: hidden; }
.win-b .gallery { padding: 1px; }
.win-b .gallery button { height: 11px; }
.win .gallery .s-normal { border-color: #a5a5a5; outline: 1px solid #c8c6c4; color: #222; }
.win .gallery .s-bad { background: #ffc7ce; color: #b0293a; }
.win .gallery .s-good { background: #c6efce; color: #2f7d32; }
.win .gallery .s-neutral { background: #ffeb9c; color: #a96a12; }
.win .gallery .s-calc { background: #f2f2f2; border-color: #9a9a9a; color: #fa7d00; font-weight: 700; }
.win .gallery .s-check { background: #a5a5a5; border: 2px solid #666; padding-left: 1px; color: #fff; font-weight: 700; }
.win .gallery .s-expl { color: #8a8a8a; font-style: italic; }
.win .gallery .s-input { background: #ffcc99; border-color: #999; color: #5a5a82; }
.scroll { display: grid; align-self: start; width: 8px; margin-right: 4px; border: 1px solid #d5d3d1; background: #fff; }
.scroll button { height: 9px; border-bottom: 1px solid #d5d3d1; }
.scroll svg { width: 6px; height: 6px; }
.flip svg { transform: rotate(180deg); opacity: .4; }
.cells .body { justify-content: space-evenly; }
.editing .list { width: 46px; padding-left: 4px; }
.editing .big { flex: 1; }
.editing .list .c { margin-left: 1px; }
.sens .body { justify-content: center; }
.off { opacity: .45; }
.big.off { color: #444; }

/* Formula bar */
.formula { display: flex; align-items: flex-start; height: 33px; padding: 4px 0 0 3px; }
.win-b .formula { height: 30px; padding-left: 2px; }
.cell, .fx { display: flex; align-items: center; height: 14px; border: 1px solid #d4d4d4; background: #fff; }
.cell { width: 54px; padding: 0 3px; }
.win-b .cell { width: 48px; }
.win-b .cell, .win-b .fx { height: 13px; }
.cell input { flex: 1; min-width: 0; }
.dots { width: 15px; text-align: center; line-height: 14px; color: #999; }
.win-b .dots { width: 14px; line-height: 12px; }
.fx { width: 59px; justify-content: space-around; }
.win-b .fx { width: 50px; }
.fx em { font: italic 8px/10px "Liberation Serif", serif; }
.win .bar { flex: 1; height: 24px; margin-left: 2px; background: #fff; }
.win-b .bar { height: 21px; }

/* Sheet */
table { width: 100%; table-layout: fixed; border-spacing: 0; font: 7px/9px Lato, sans-serif; color: #1a1a1a; background: #fff; }
.win-b table { font: 6px/8px Lato, sans-serif; }
th, td { padding: 0; border: solid #e2e2e2; border-width: 0 1px 1px 0; font-weight: 400; text-align: left; }
td { padding-left: 1px; }
th { background: #e6e6e6; text-align: center; color: #444; border-color: #cdcdcd; }
thead th { height: 12px; }
.win-b thead th { height: 10px; }
.n { text-align: right; padding-left: 0; padding-right: 1px; }
.sel { background: #d2d2d2; border-bottom: 2px solid #217346; color: #217346; }
.corner svg { width: 6px; height: 6px; margin-left: auto; margin-right: 2px; }
tbody tr { height: 11px; }
tbody tr:nth-child(3n+2) { height: 10px; }
.win-b tbody tr { height: 9px; }
.win-b tbody tr:nth-child(5n) { height: 10px; }
.w12 { width: 12px; } .w14 { width: 14px; } .w28 { width: 28px; } .w29 { width: 29px; } .w30 { width: 30px; }
.w33 { width: 33px; } .w34 { width: 34px; } .w35 { width: 35px; } .w39 { width: 39px; } .w40 { width: 40px; }
.w41 { width: 41px; } .w42 { width: 42px; } .w44 { width: 44px; } .w46 { width: 46px; } .w47 { width: 47px; }
.w83 { width: 83px; } .w90 { width: 90px; } .w251 { width: 251px; }
```
